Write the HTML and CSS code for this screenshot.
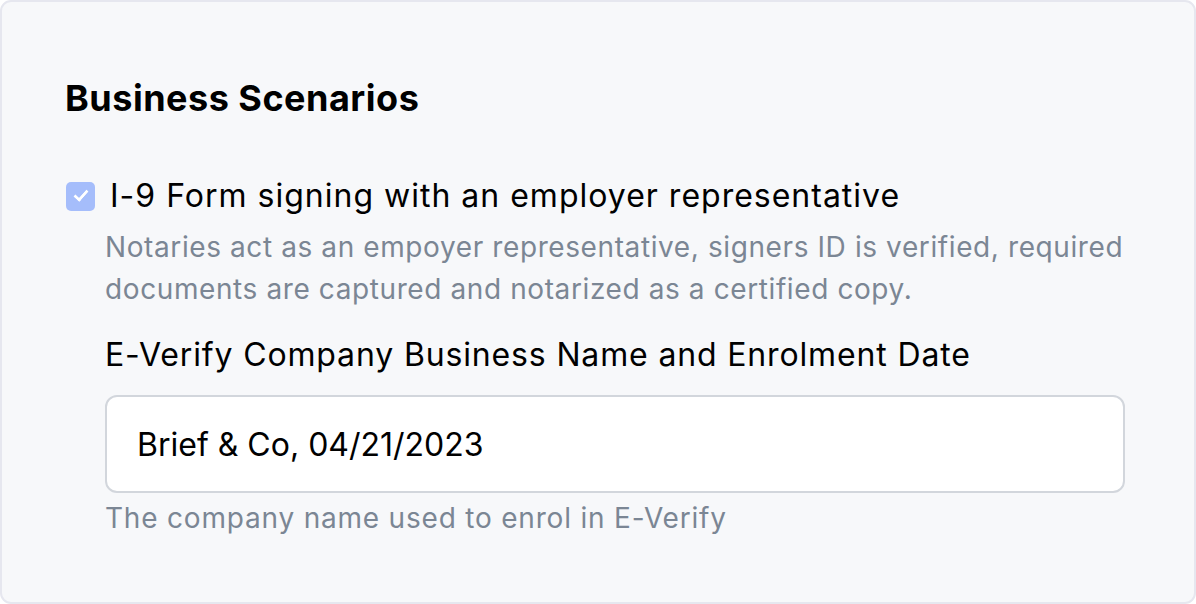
FILE: index.html
```html
<!DOCTYPE html>
<html>
<head>
<meta charset="utf-8">
<link rel="stylesheet" href="styles.css">
</head>
<body>
<section class="card">
  <h2 class="title">Business Scenarios</h2>
  <div class="option">
    <div class="check-row">
      <span class="checkbox"><span class="tick"></span></span>
      <span class="check-label">I-9 Form signing with an employer representative</span>
    </div>
    <div class="option-body">
      <p class="desc">Notaries act as an empoyer representative, signers ID is verified, required documents are captured and notarized as a certified copy.</p>
      <div class="field">
        <label class="field-label">E-Verify Company Business Name and Enrolment Date</label>
        <div class="input">Brief &amp; Co, 04/21/2023</div>
        <p class="help">The company name used to enrol in E-Verify</p>
      </div>
    </div>
  </div>
</section>
</body>
</html>
```
FILE: styles.css
```css
html, body {
  margin: 0;
  padding: 0;
  background: #ffffff;
}
body {
  font-family: "Inter", "Open Sans", sans-serif;
  color: #000;
}
.card {
  box-sizing: border-box;
  width: 1196px;
  height: 604px;
  border: 2px solid #e6e7ef;
  border-radius: 11px;
  background: #f7f8fa;
  padding: 72px 60px 0 63px;
}
.title {
  margin: 0;
  font-size: 36px;
  font-weight: 700;
  line-height: 48px;
  letter-spacing: 0.5px;
}
.option {
  margin-top: 53px;
}
.check-row {
  display: flex;
  align-items: center;
  gap: 16px;
}
.checkbox {
  width: 29px;
  height: 29px;
  border-radius: 5px;
  background: #a5bdfb;
  display: flex;
  align-items: center;
  justify-content: center;
  flex: none;
  margin-left: 1px;
}
.tick {
  display: block;
  box-sizing: border-box;
  width: 8px;
  height: 14px;
  border-right: 3px solid #fff;
  border-bottom: 3px solid #fff;
  border-radius: 0 0 1px 0;
  transform: translate(0, -2px) rotate(42deg);
}
.check-label {
  font-size: 32px;
  line-height: 42px;
  letter-spacing: 1px;
  margin-left: -1px;
}
.option-body {
  padding-left: 40px;
}
.desc {
  margin: 9px 0 0;
  font-size: 28px;
  line-height: 42px;
  letter-spacing: 0.6px;
  color: #7b8694;
}
.field {
  margin-top: 24px;
}
.field-label {
  display: block;
  font-size: 32px;
  line-height: 42px;
  letter-spacing: 0.85px;
}
.input {
  margin-top: 19px;
  box-sizing: border-box;
  height: 98px;
  width: 1020px;
  border: 2px solid #d2d6dc;
  border-radius: 12px;
  background: #fff;
  padding: 0 30px;
  display: flex;
  align-items: center;
  font-size: 32px;
  letter-spacing: 0;
}
.help {
  margin: 5px 0 0;
  font-size: 28px;
  line-height: 40px;
  letter-spacing: 0.8px;
  color: #7b8694;
}
```
